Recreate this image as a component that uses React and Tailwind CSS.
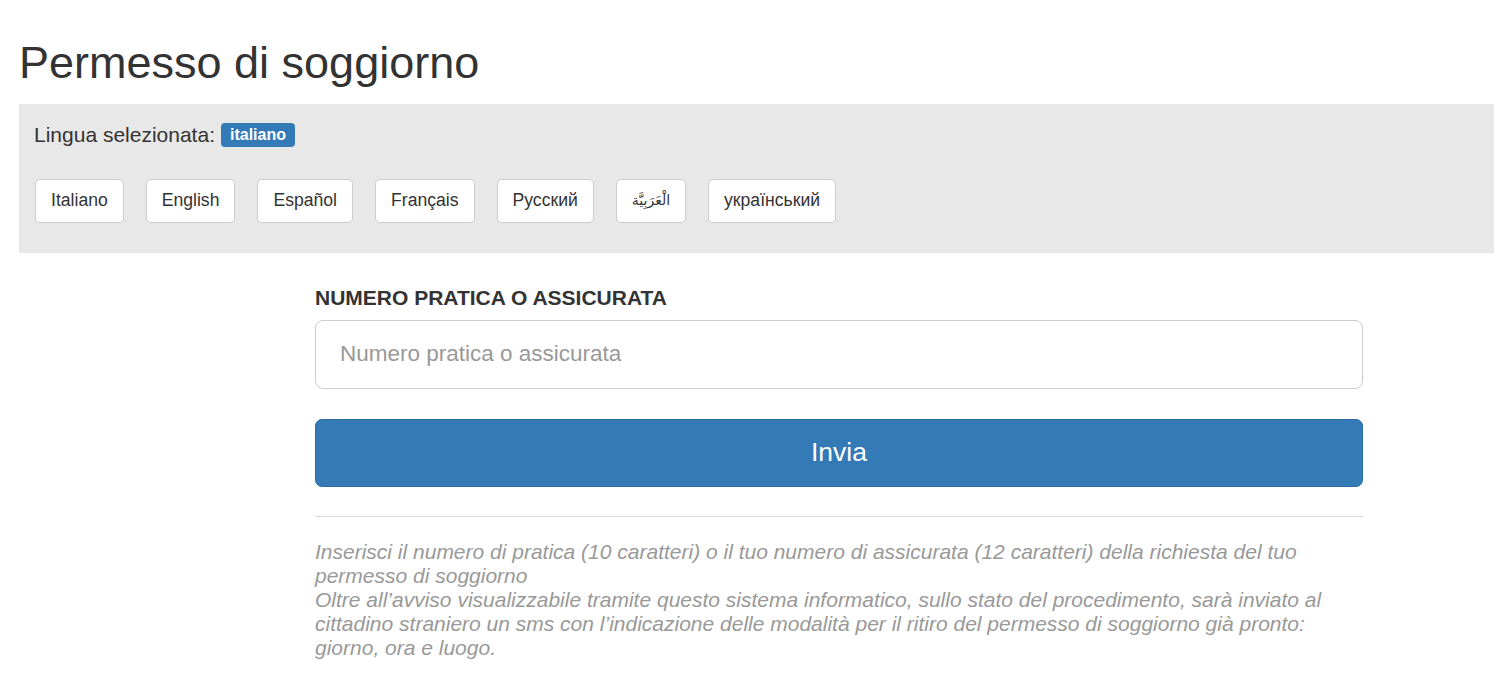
import React, { useState } from 'react';

const languages = [
  { label: 'Italiano' },
  { label: 'English' },
  { label: 'Español' },
  { label: 'Français' },
  { label: 'Русский' },
  { label: 'الْعَرَبِيَّة', arabic: true },
  { label: 'український' },
];

export default function App() {
  const [value, setValue] = useState('');

  return (
    <div className="min-h-[697px] bg-white text-[#333] font-['Liberation_Sans','DejaVu_Sans',Arial,sans-serif]">
      <div className="pl-[19px]">
        <h1 className="pt-[38px] pb-[16px] text-[45px] leading-[1.1] font-normal">Permesso di soggiorno</h1>

        {/* language panel */}
        <div className="bg-[#e8e8e8] h-[149px] pl-[16px] pt-[18px]">
          <div className="-ml-px flex items-center text-[21px] leading-[26px]">
            <span>Lingua selezionata:</span>
            <span className="ml-[6px] rounded-[4px] bg-[#337ab7] px-[9px] py-[2px] text-[16px] font-bold leading-[20px] text-white">italiano</span>
          </div>
          <div className="mt-[31px] flex gap-[22px]">
            {languages.map((lang) => (
              <button
                key={lang.label}
                className={`h-[44px] rounded-[5px] border border-[#ccc] bg-white px-[15px] text-[#333] ${lang.arabic ? 'text-[14px]' : 'text-[17.6px]'}`}
              >
                {lang.label}
              </button>
            ))}
          </div>
        </div>
      </div>

      {/* form */}
      <div className="ml-[315px] w-[1048px] pt-[34px]">
        <label className="block text-[21px] font-bold uppercase leading-[22px]">Numero pratica o assicurata</label>
        <input
          value={value}
          onChange={(e) => setValue(e.target.value)}
          placeholder="Numero pratica o assicurata"
          className="mt-[11px] block h-[69px] w-full rounded-[8px] border border-[#ccc] px-[24px] text-[22.5px] text-[#555] placeholder:text-[#999] outline-none"
        />
        <button className="mt-[30px] block h-[68px] w-full rounded-[7px] border border-[#2e6da4] bg-[#337ab7] text-[26.5px] text-white">
          Invia
        </button>
        <hr className="mt-[29px] border-t border-[#ddd]" />
        <p className="mt-[23px] text-[21px] italic leading-[24px] text-[#999] pr-[20px]">
          Inserisci il numero di pratica (10 caratteri) o il tuo numero di assicurata (12 caratteri) della richiesta del tuo permesso di soggiorno
          <br />
          Oltre all’avviso visualizzabile tramite questo sistema informatico, sullo stato del procedimento, sarà inviato al cittadino straniero un sms con l’indicazione delle modalità per il ritiro del permesso di soggiorno già pronto: giorno, ora e luogo.
        </p>
      </div>
    </div>
  );
}
